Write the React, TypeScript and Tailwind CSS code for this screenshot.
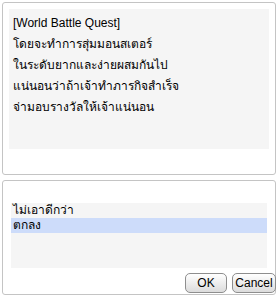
import React from 'react';

const story = [
  '[World Battle Quest]',
  'โดยจะทำการสุ่มมอนสเตอร์',
  'ในระดับยากและง่ายผสมกันไป',
  'แน่นอนว่าถ้าเจ้าทำภารกิจสำเร็จ',
  'จ่ามอบรางวัลให้เจ้าแน่นอน',
];

const choices = ['ไม่เอาดีกว่า', 'ตกลง'];

export default function App() {
  return (
    <div
      className="w-[278px] h-[296px] bg-white text-black text-[12px] overflow-hidden flex flex-col pt-[2px] px-[2px] gap-[5px]"
      style={{ fontFamily: '"Liberation Sans", "DejaVu Sans", "Noto Sans", sans-serif' }}
    >
      {/* message panel */}
      <div className="h-[173px] border border-[#c4c4c4] rounded-[3px] pt-[6px] px-[6px]">
        <div className="h-[140px] bg-[#f5f5f5] pl-[4px] pt-[6px] flex flex-col">
          {story.map((line, i) => (
            <div key={i} className="h-[21px] leading-[16px] whitespace-nowrap">
              {line}
            </div>
          ))}
        </div>
      </div>

      {/* choice panel */}
      <div className="h-[115px] border border-[#c4c4c4] rounded-[3px] px-[8px] pt-[22px] flex flex-col">
        <div className="h-[65px] bg-[#f5f5f5] flex flex-col">
          {choices.map((c, i) => (
            <div
              key={i}
              className={
                'h-[15px] leading-[15px] pl-[2px] whitespace-nowrap ' +
                (i === 1 ? 'bg-[#cddcfa]' : '')
              }
            >
              {c}
            </div>
          ))}
        </div>
        <div className="flex justify-end gap-[5px] mt-[5px] -mr-[9px]">
          <button className="w-[42px] h-[20px] rounded-[5px] border border-[#8e8e8e] bg-gradient-to-b from-white to-[#dcdcdc] text-[12px] leading-none">
            OK
          </button>
          <button className="w-[44px] h-[20px] rounded-[5px] border border-[#8e8e8e] bg-gradient-to-b from-white to-[#dcdcdc] text-[12px] leading-none">
            Cancel
          </button>
        </div>
      </div>
    </div>
  );
}
